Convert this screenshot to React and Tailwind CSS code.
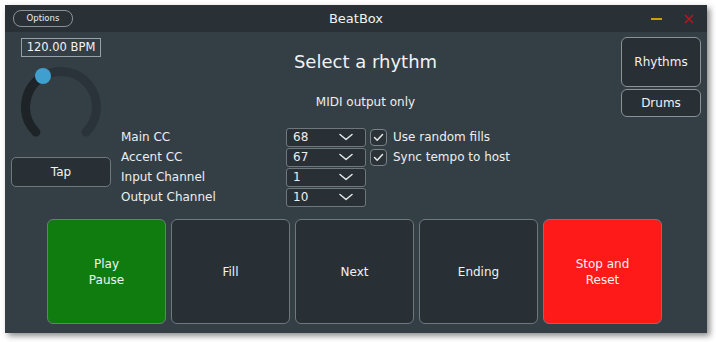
import React from "react";

const font = { fontFamily: '"DejaVu Sans", Verdana, sans-serif' };

function Chevron() {
  return (
    <svg width="14" height="8" viewBox="0 0 14 8" className="shrink-0">
      <path d="M1 1.5 L7 6.5 L13 1.5" fill="none" stroke="#e6e9ea" strokeWidth="1.5" strokeLinecap="round" strokeLinejoin="round" />
    </svg>
  );
}

function Dropdown({ value }) {
  return (
    <div className="w-[80px] h-[19px] flex items-center justify-between pl-[6px] pr-[12px] border border-[#6f787d] rounded-[3px] bg-[#283035] text-[12px] text-[#eceeef]">
      <span>{value}</span>
      <Chevron />
    </div>
  );
}

function Check({ label }) {
  return (
    <div className="flex items-center gap-[6px] ml-[4px]">
      <div className="w-[17px] h-[17px] border border-[#7a8388] rounded-[4px] bg-[#2b3338] flex items-center justify-center">
        <svg width="11" height="9" viewBox="0 0 11 9">
          <path d="M1.5 4.5 L4.2 7.2 L9.5 1.5" fill="none" stroke="#e6e9ea" strokeWidth="1.5" strokeLinecap="round" strokeLinejoin="round" />
        </svg>
      </div>
      <span className="text-[12px] text-[#eceeef]">{label}</span>
    </div>
  );
}

function Knob() {
  return (
    <svg width="90" height="100" viewBox="0 0 90 100">
      <path d="M14.9 75.1 A35.5 35.5 0 0 1 22.25 19.26" fill="none" stroke="#1d2327" strokeWidth="9" strokeLinecap="round" />
      <path d="M22.25 19.26 A35.5 35.5 0 0 1 65.1 75.1" fill="none" stroke="#2a3339" strokeWidth="9" strokeLinecap="round" />
      <circle cx="22" cy="19" r="8" fill="#3fa0cf" />
    </svg>
  );
}

function BigButton({ children, color }) {
  return (
    <button
      className={
        "w-[119px] h-[105px] rounded-[6px] border border-[#6f787d] flex items-center justify-center text-[12px] leading-[16px] text-[#f1f2f3] text-center " +
        color
      }
    >
      {children}
    </button>
  );
}

const rows = [
  ["Main CC", "68", "Use random fills"],
  ["Accent CC", "67", "Sync tempo to host"],
  ["Input Channel", "1", null],
  ["Output Channel", "10", null],
];

export default function App() {
  return (
    <div className="w-[716px] h-[342px] bg-white pt-[5px] pl-[5px]" style={font}>
      <div className="w-[702px] h-[328px] bg-[#343e45] flex flex-col shadow-[3px_3px_6px_rgba(0,0,0,0.45)]">
        {/* title bar */}
        <div className="h-[27px] bg-[#293136] grid grid-cols-[1fr_auto_1fr] items-center">
          <div className="pl-[8px]">
            <div className="w-[60px] h-[17px] rounded-[8px] border border-[#8b9297] flex items-center justify-center text-[8.5px] text-[#eceeef]">
              Options
            </div>
          </div>
          <div className="text-[13px] text-[#f1f2f3]">BeatBox</div>
          <div className="flex items-center justify-end gap-[22px] pr-[13px]">
            <div className="w-[11px] h-[2px] bg-[#c9a00e] mt-[1px]" />
            <svg width="10" height="10" viewBox="0 0 10 10">
              <path d="M1 1 L9 9 M9 1 L1 9" stroke="#c1141a" strokeWidth="1.4" />
            </svg>
          </div>
        </div>

        {/* top section */}
        <div className="h-[187px] flex">
          <div className="w-[110px] pl-[6px] pt-[6px] flex flex-col">
            <div className="ml-[10px] w-[80px] h-[19px] border border-[#9aa1a5] flex items-center justify-center text-[11.5px] text-[#f1f2f3]">
              120.00 BPM
            </div>
            <div className="ml-[10px]">
              <Knob />
            </div>
            <button className="w-[100px] h-[30px] rounded-[5px] border border-[#6f787d] bg-[#283035] text-[12px] text-[#f1f2f3]">
              Tap
            </button>
          </div>

          <div className="flex-1 flex flex-col">
            <div className="mt-[19px] text-center text-[18px] leading-[22px] text-[#f1f2f3]">Select a rhythm</div>
            <div className="mt-[21px] text-center text-[12px] leading-[16px] text-[#eceeef]">MIDI output only</div>
            <div className="mt-[17px] pl-[6px] flex flex-col">
              {rows.map(([label, val, check]) => (
                <div key={label} className="h-[20px] flex items-center">
                  <div className="w-[165px] text-[12px] text-[#eceeef]">{label}</div>
                  <Dropdown value={val} />
                  {check && <Check label={check} />}
                </div>
              ))}
            </div>
          </div>

          <div className="w-[80px] mr-[6px] ml-[5px] pt-[5px] flex flex-col gap-[2px]">
            <button className="h-[50px] rounded-[6px] border border-[#8b9297] bg-[#283035] text-[12px] text-[#f1f2f3]">
              Rhythms
            </button>
            <button className="h-[28px] rounded-[6px] border border-[#8b9297] bg-[#283035] text-[12px] text-[#f1f2f3]">
              Drums
            </button>
          </div>
        </div>

        {/* transport buttons */}
        <div className="pl-[42px] flex gap-[5px]">
          <BigButton color="bg-[#107c10]">
            Play
            <br />
            Pause
          </BigButton>
          <BigButton color="bg-[#283035]">Fill</BigButton>
          <BigButton color="bg-[#283035]">Next</BigButton>
          <BigButton color="bg-[#283035]">Ending</BigButton>
          <BigButton color="bg-[#ff1a1a]">
            Stop and
            <br />
            Reset
          </BigButton>
        </div>
      </div>
    </div>
  );
}
